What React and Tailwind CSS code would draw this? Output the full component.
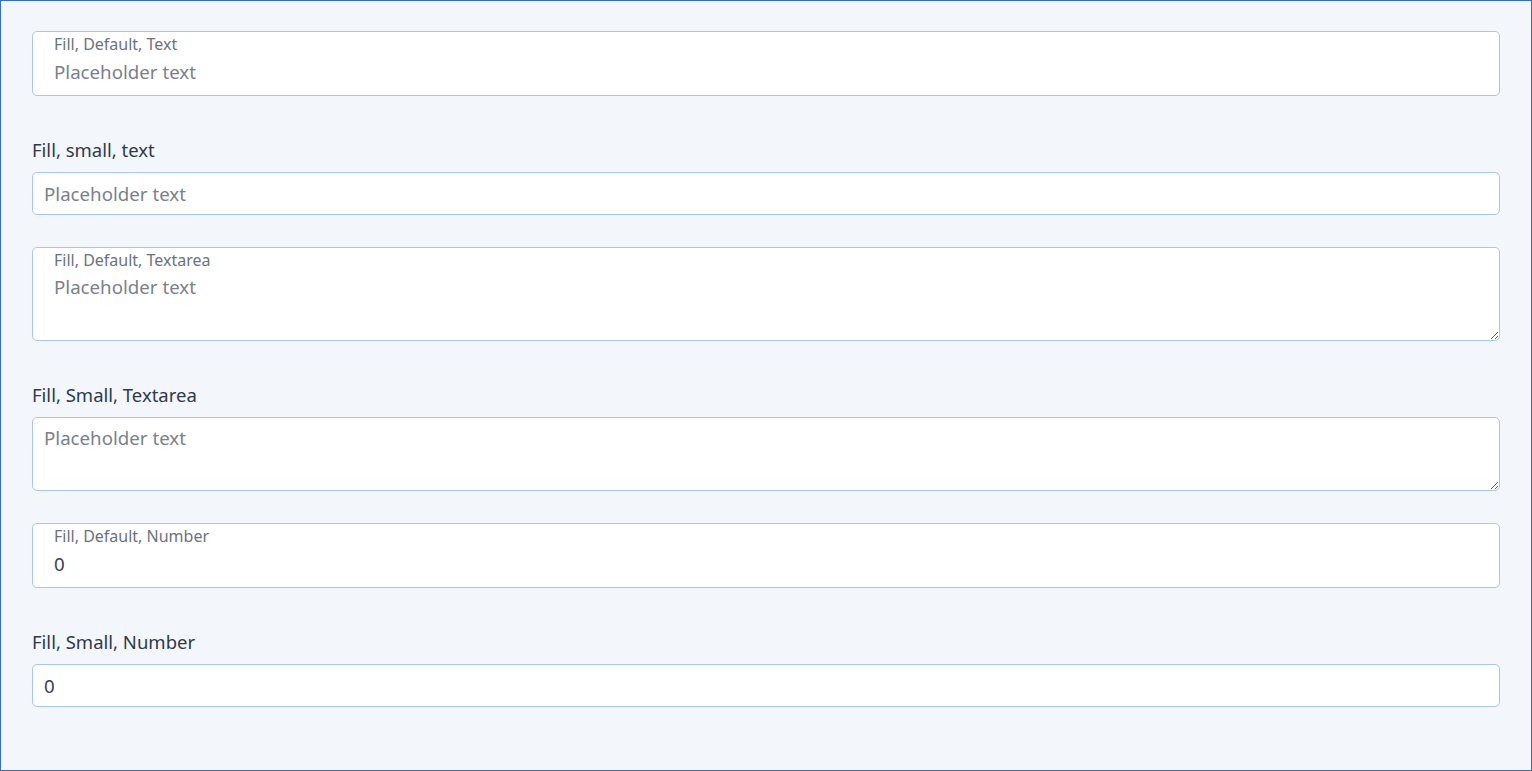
import { useState } from 'react'

const font = { fontFamily: '"Noto Sans", "Open Sans", sans-serif' }

function FloatInput({ label, type = 'text', value, placeholder }) {
  const [v, setV] = useState(value ?? '')
  return (
    <div className="relative">
      <span className="absolute left-[22px] top-[3px] text-[16px] leading-[20px] text-[#6b7280] pointer-events-none">
        {label}
      </span>
      <input
        type={type}
        value={v}
        onChange={e => setV(e.target.value)}
        placeholder={placeholder}
        className="block w-full h-[65px] pt-[15px] px-[21px] bg-white border border-[#aac6ec] rounded-[5px] text-[18.7px] text-[#374151] placeholder:text-[#7b808a] outline-none [appearance:textfield] [&::-webkit-inner-spin-button]:appearance-none"
      />
    </div>
  )
}

function FloatTextarea({ label, placeholder }) {
  return (
    <div className="relative">
      <span className="absolute left-[22px] top-[3px] text-[16px] leading-[20px] text-[#6b7280] pointer-events-none z-10">
        {label}
      </span>
      <textarea
        placeholder={placeholder}
        className="block w-full h-[94px] pt-[26px] px-[21px] bg-white border border-[#aac6ec] rounded-[5px] text-[18.7px] leading-[26px] text-[#374151] placeholder:text-[#7b808a] outline-none resize-y"
      />
    </div>
  )
}

function SmallField({ label, children }) {
  return (
    <div className="pt-[10px]">
      <div className="text-[18.5px] leading-[24px] text-[#2f3a4a] mb-[10px]">{label}</div>
      {children}
    </div>
  )
}

export default function App() {
  const [num, setNum] = useState('0')
  return (
    <div style={font} className="h-[771px] bg-[#f3f6fb] border border-[#3d6db3] px-[31px] pt-[30px] flex flex-col gap-[32px]">
      <FloatInput label="Fill, Default, Text" placeholder="Placeholder text" />

      <SmallField label="Fill, small, text">
        <input
          type="text"
          placeholder="Placeholder text"
          className="block w-full h-[43px] px-[11px] bg-white border border-[#aac6ec] rounded-[5px] text-[18.7px] text-[#374151] placeholder:text-[#7b808a] outline-none"
        />
      </SmallField>

      <FloatTextarea label="Fill, Default, Textarea" placeholder="Placeholder text" />

      <SmallField label="Fill, Small, Textarea">
        <textarea
          placeholder="Placeholder text"
          className="block w-full h-[74px] pt-[7px] px-[11px] bg-white border border-[#aac6ec] rounded-[5px] text-[18.7px] leading-[26px] text-[#374151] placeholder:text-[#7b808a] outline-none resize-y"
        />
      </SmallField>

      <FloatInput label="Fill, Default, Number" type="number" value="0" />

      <SmallField label="Fill, Small, Number">
        <input
          type="number"
          value={num}
          onChange={e => setNum(e.target.value)}
          className="block w-full h-[43px] px-[11px] bg-white border border-[#aac6ec] rounded-[5px] text-[18.7px] text-[#374151] outline-none [appearance:textfield] [&::-webkit-inner-spin-button]:appearance-none"
        />
      </SmallField>
    </div>
  )
}
